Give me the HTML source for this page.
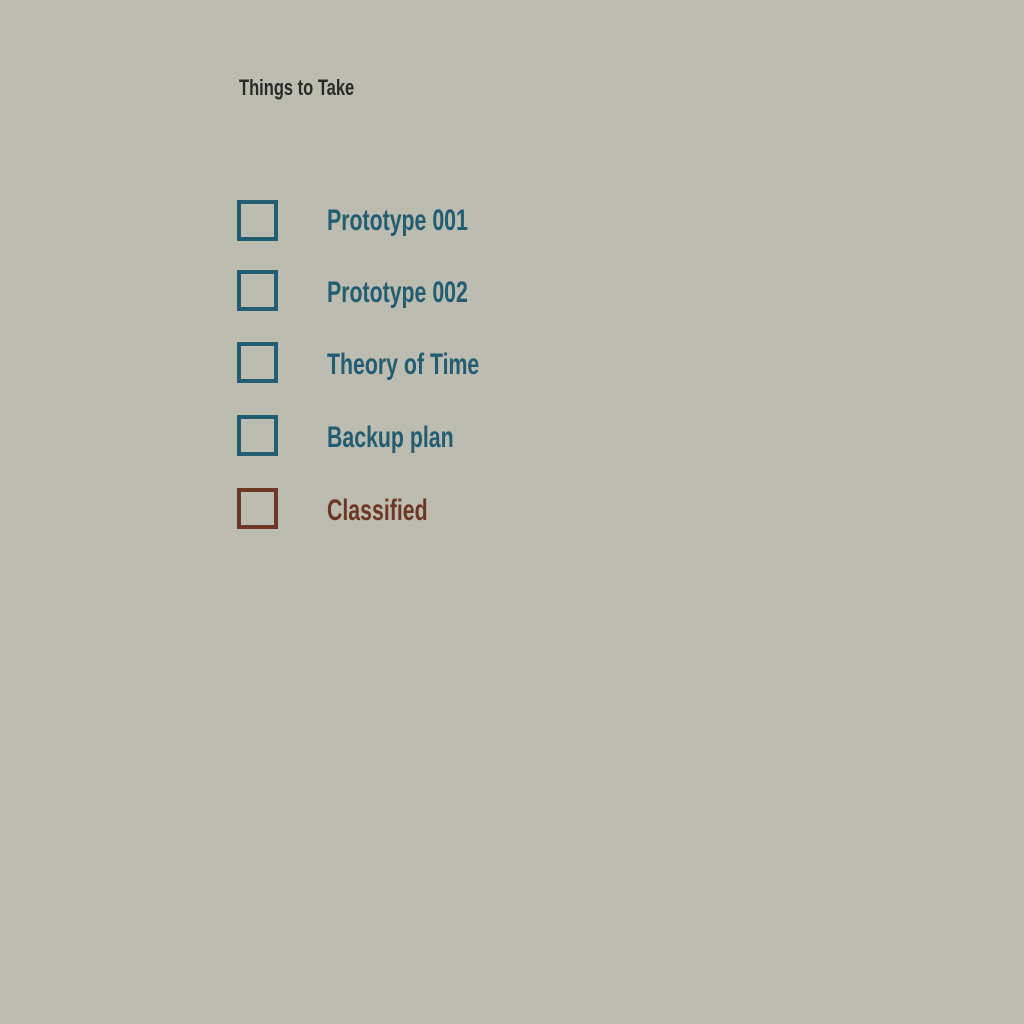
<!DOCTYPE html>
<html><head><style>
body{margin:0;width:1024px;height:1024px;background:#bcbcb0;position:relative;overflow:hidden;font-family:"Liberation Sans Narrow","Liberation Sans",sans-serif;font-weight:bold}
.t{position:absolute;white-space:nowrap;transform-origin:left center}
.b{position:absolute;left:237px;width:33px;height:33px;border:4px solid #235d72}
</style></head><body>
<div class="t" style="left:239px;top:75px;font-size:22px;color:#2a2a28;transform:scaleX(0.75)">Things to Take</div>

<div class="b" style="top:200px"></div>
<div class="t" style="left:327px;top:204px;font-size:30px;color:#235d72;transform:scaleX(0.71)">Prototype 001</div>
<div class="b" style="top:270px"></div>
<div class="t" style="left:327px;top:276px;font-size:30px;color:#235d72;transform:scaleX(0.71)">Prototype 002</div>
<div class="b" style="top:342px"></div>
<div class="t" style="left:327px;top:348px;font-size:30px;color:#235d72;transform:scaleX(0.71)">Theory of Time</div>
<div class="b" style="top:415px"></div>
<div class="t" style="left:327px;top:421px;font-size:30px;color:#235d72;transform:scaleX(0.71)">Backup plan</div>
<div class="b" style="top:488px;border-color:#6e3624"></div>
<div class="t" style="left:327px;top:494px;font-size:30px;color:#6e3624;transform:scaleX(0.71)">Classified</div>
</body></html>
